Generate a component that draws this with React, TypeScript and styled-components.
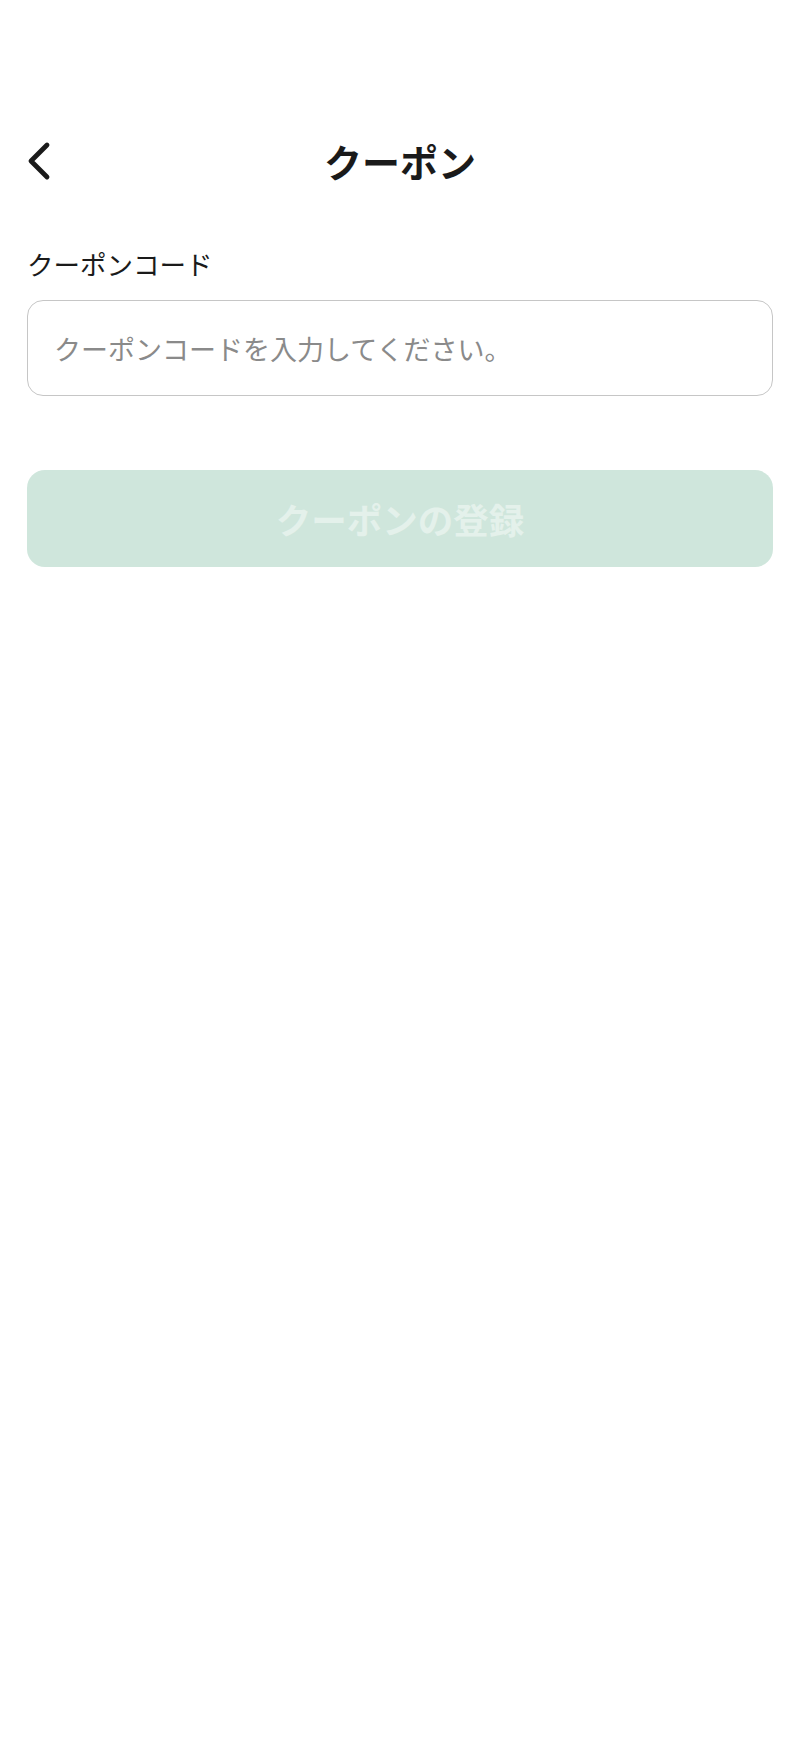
import React from "react";
import styled, { createGlobalStyle } from "styled-components";

const Global = createGlobalStyle`
  html, body { margin: 0; padding: 0; background: #ffffff; }
  body { font-family: "Noto Sans CJK JP", "Noto Sans", sans-serif; }
  * { box-sizing: border-box; }
`;

const Page = styled.div`
  width: 800px;
  min-height: 1738px;
  background: #ffffff;
  padding: 126px 27px 0;
  display: flex;
  flex-direction: column;
`;

const Header = styled.header`
  position: relative;
  height: 70px;
  display: flex;
  align-items: center;
  justify-content: center;
`;

const BackButton = styled.button`
  position: absolute;
  left: 0;
  top: 50%;
  transform: translateY(-50%);
  border: 0;
  background: transparent;
  padding: 0;
  width: 30px;
  height: 40px;
  display: flex;
  align-items: center;
  cursor: pointer;
`;

const Title = styled.h1`
  margin: 0;
  font-size: 38px;
  font-weight: 600;
  color: #1a1a1a;
  line-height: 1;
`;

const Field = styled.div`
  margin-top: 50px;
  display: flex;
  flex-direction: column;
  gap: 18px;
`;

const Label = styled.label`
  font-size: 26.5px;
  line-height: 36px;
  color: #1a1a1a;
  font-weight: 400;
`;

const Input = styled.input`
  width: 100%;
  height: 96px;
  border: 1.5px solid #c6c6c6;
  border-radius: 16px;
  padding: 0 26px;
  font-family: "Noto Sans CJK JP", "Noto Sans", sans-serif;
  font-size: 27px;
  color: #1a1a1a;
  outline: none;
  &::placeholder { color: #8a8a8a; }
`;

const Submit = styled.button<{ disabled?: boolean }>`
  margin-top: 74px;
  width: 100%;
  height: 97px;
  border: 0;
  border-radius: 18px;
  background: ${(p) => (p.disabled ? "#cfe6dc" : "#2eae7a")};
  color: ${(p) => (p.disabled ? "#e4f1eb" : "#ffffff")};
  font-family: "Noto Sans CJK JP", "Noto Sans", sans-serif;
  font-size: 35.5px;
  font-weight: 700;
  display: flex;
  align-items: center;
  justify-content: center;
`;

export default function App() {
  return (
    <>
      <Global />
      <Page>
        <Header>
          <BackButton aria-label="戻る">
            <svg width="24" height="40" viewBox="0 0 24 40" fill="none">
              <polyline
                points="20,4 4,20 20,36"
                stroke="#1a1a1a"
                strokeWidth="4.8"
                strokeLinecap="round"
                strokeLinejoin="round"
              />
            </svg>
          </BackButton>
          <Title>クーポン</Title>
        </Header>
        <Field>
          <Label htmlFor="coupon">クーポンコード</Label>
          <Input id="coupon" placeholder="クーポンコードを入力してください。" />
        </Field>
        <Submit disabled>クーポンの登録</Submit>
      </Page>
    </>
  );
}
